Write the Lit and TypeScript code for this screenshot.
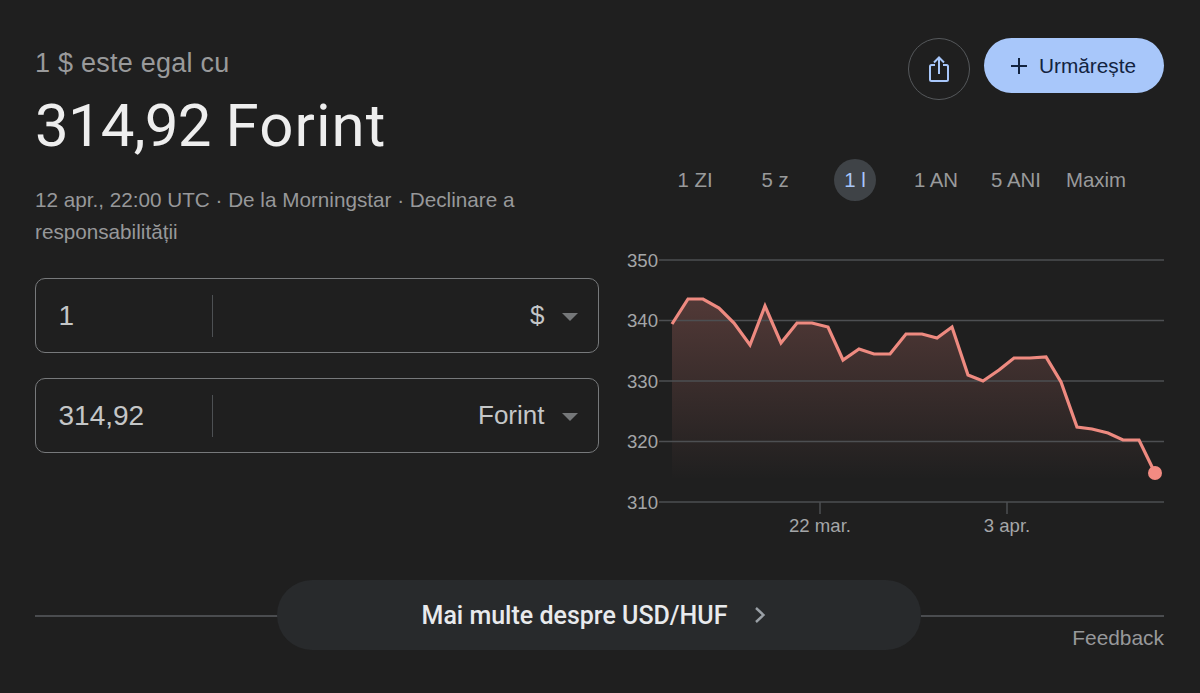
import { LitElement, html, css, svg } from 'lit';
import { customElement } from 'lit/decorators.js';

const RANGES = ['1 ZI', '5 z', '1 l', '1 AN', '5 ANI', 'Maxim'];

// chart coordinates are relative to the svg box, which starts at x=627, y=248
const POINTS: [number, number][] = [
  [45, 76], [61, 51], [76, 51], [92, 60], [107, 75], [123, 97], [138, 58], [154, 95],
  [170, 75], [185, 75], [201, 79], [216, 112], [232, 101], [247, 106], [263, 106], [279, 86],
  [295, 86], [310, 90], [325, 79], [341, 127], [356, 133], [372, 122], [387, 110], [403, 110],
  [419, 109], [434, 134], [450, 179], [465, 181], [481, 185], [496, 192], [512, 192], [528, 225],
];
const GRID = [
  { y: 12, label: '350' },
  { y: 72.5, label: '340' },
  { y: 133, label: '330' },
  { y: 193.5, label: '320' },
  { y: 254, label: '310' },
];
const TICKS = [
  { x: 193, label: '22 mar.' },
  { x: 380, label: '3 apr.' },
];

@customElement('app-root')
export class AppRoot extends LitElement {
  static styles = css`
    :host {
      display: block;
      height: 693px;
      background: #1f1f1f;
      font-family: 'Liberation Sans', Arial, sans-serif;
      color: #e8eaed;
      overflow: hidden;
    }

    .page {
      padding: 0 36px 0 35px;
    }

    .top {
      display: grid;
      grid-template-columns: 563.5px 537px;
      column-gap: 28.5px;
      height: 555px;
    }

    .eyebrow {
      padding-top: 47px;
      font-size: 27px;
      letter-spacing: 0.25px;
      line-height: 32px;
      color: #999a9b;
    }

    .rate {
      margin-top: 15px;
      font-family: Roboto, 'Liberation Sans', sans-serif;
      font-size: 60px;
      line-height: 64px;
      color: #eeeeee;
    }

    .rate .value {
      letter-spacing: -0.8px;
    }

    .rate .currency {
      letter-spacing: 1.1px;
    }

    .meta {
      margin-top: 26px;
      width: 520px;
      font-size: 20.7px;
      line-height: 32px;
      color: #97989a;
    }

    .converter {
      display: flex;
      flex-direction: column;
      gap: 25px;
      margin-top: 30px;
    }

    .field {
      display: flex;
      align-items: center;
      height: 75px;
      box-sizing: border-box;
      border: 1.5px solid #77797b;
      border-radius: 10px;
      font-size: 26px;
      color: #c4c6c7;
    }

    .amount {
      box-sizing: border-box;
      width: 176.5px;
      height: 42px;
      padding-left: 22.5px;
      font-size: 28px;
      line-height: 41px;
      border-right: 1.5px solid #4d5053;
    }

    .unit {
      flex: 1;
      text-align: right;
    }

    .caret {
      width: 0;
      height: 0;
      margin: 2px 20px 0 17px;
      border-left: 8px solid transparent;
      border-right: 8px solid transparent;
      border-top: 8px solid #757779;
    }

    .chart-col {
      display: flex;
      flex-direction: column;
    }

    .actions {
      display: flex;
      justify-content: flex-end;
      align-items: flex-start;
      gap: 14px;
      padding-top: 38px;
    }

    .share {
      display: flex;
      align-items: center;
      justify-content: center;
      box-sizing: border-box;
      width: 62px;
      height: 62px;
      border: 1.5px solid #55585b;
      border-radius: 50%;
    }

    .follow {
      display: flex;
      align-items: center;
      gap: 11px;
      box-sizing: border-box;
      width: 180px;
      height: 55px;
      padding-left: 26px;
      border-radius: 28px;
      background: #a8c7fa;
      color: #12233f;
      font-size: 20.8px;
    }

    .ranges {
      display: flex;
      align-items: center;
      height: 42px;
      margin-top: 59px;
      font-size: 20.4px;
      color: #999a9b;
    }

    .range {
      display: flex;
      align-items: center;
      justify-content: center;
      height: 42px;
      flex: none;
    }

    .range:nth-child(1) { width: 78px; margin-left: 29px; }
    .range:nth-child(2) { width: 82px; }
    .range:nth-child(3) { width: 42px; margin-left: 18px; }
    .range:nth-child(4) { width: 80px; margin-left: 20px; }
    .range:nth-child(5) { width: 76px; margin-left: 2px; }
    .range:nth-child(6) { width: 90px; margin-left: -3px; }

    .range.active {
      border-radius: 50%;
      background: #3f4347;
      color: #a8c7fa;
    }

    .plot {
      display: block;
      margin-top: 47px;
    }

    .axis-label {
      font-family: 'Liberation Sans', Arial, sans-serif;
      font-size: 18.6px;
      fill: #a4a6a8;
    }

    .bottom {
      display: flex;
      align-items: center;
      height: 70px;
      margin-top: 25px;
    }

    .rule {
      flex: 1;
      height: 2px;
      background: #4a4c4f;
      margin-top: 1px;
    }

    .more {
      display: flex;
      align-items: center;
      justify-content: center;
      gap: 27px;
      flex: none;
      margin-left: -1px;
      width: 644px;
      height: 70px;
      padding-right: 10px;
      box-sizing: border-box;
      border-radius: 35px;
      background: #282a2c;
      color: #e8eaed;
      font-family: Roboto, 'Liberation Sans', sans-serif;
      font-size: 25px;
      font-weight: 500;
    }

    .feedback {
      margin-top: -24px;
      text-align: right;
      font-size: 20.9px;
      line-height: 24px;
      color: #97989a;
    }
  `;

  renderPlot() {
    const line = POINTS.map((p) => p.join(',')).join(' ');
    const [first] = POINTS;
    const last = POINTS[POINTS.length - 1];
    const area = `${line} ${last[0]},232 ${first[0]},232`;
    return html`
      <svg class="plot" width="537" height="290" viewBox="0 0 537 290">
        <defs>
          <linearGradient id="fade" x1="0" y1="0" x2="0" y2="1">
            <stop offset="0" stop-color="#f28b82" stop-opacity="0.24"></stop>
            <stop offset="1" stop-color="#f28b82" stop-opacity="0"></stop>
          </linearGradient>
        </defs>
        <polygon points=${area} fill="url(#fade)"></polygon>
        ${GRID.map(
          (g) => svg`
            <line x1="32" x2="537" y1=${g.y} y2=${g.y} stroke="#4d4f52" stroke-width="1.5"></line>
            <text class="axis-label" x="0" y=${g.y + 6.5}>${g.label}</text>
          `
        )}
        ${TICKS.map(
          (t) => svg`
            <line x1=${t.x} x2=${t.x} y1=${254} y2=${266} stroke="#4d4f52" stroke-width="1.5"></line>
            <text class="axis-label" x=${t.x} y="284" text-anchor="middle">${t.label}</text>
          `
        )}
        <polyline points=${line} fill="none" stroke="#ee8a80" stroke-width="3.2" stroke-linejoin="miter"></polyline>
        <circle cx=${last[0]} cy=${last[1]} r="7" fill="#f28b82"></circle>
      </svg>
    `;
  }

  render() {
    return html`
      <div class="page">
        <div class="top">
          <div>
            <div class="eyebrow">1 $ este egal cu</div>
            <div class="rate"><span class="value">314,92</span> <span class="currency">Forint</span></div>
            <div class="meta">12 apr., 22:00 UTC · De la Morningstar · Declinare a responsabilității</div>
            <div class="converter">
              <div class="field">
                <div class="amount">1</div>
                <div class="unit">$</div>
                <div class="caret"></div>
              </div>
              <div class="field">
                <div class="amount">314,92</div>
                <div class="unit">Forint</div>
                <div class="caret"></div>
              </div>
            </div>
          </div>
          <div class="chart-col">
            <div class="actions">
              <div class="share">
                <svg width="24" height="28" viewBox="0 0 24 28" fill="none" stroke="#a8c7fa" stroke-width="2">
                  <path d="M8 10H4.5A1.5 1.5 0 0 0 3 11.5V24.5A1.5 1.5 0 0 0 4.5 26H19.5A1.5 1.5 0 0 0 21 24.5V11.5A1.5 1.5 0 0 0 19.5 10H16"></path>
                  <path d="M12 19V3M7 7.5L12 2.5L17 7.5"></path>
                </svg>
              </div>
              <div class="follow">
                <svg width="18" height="18" viewBox="0 0 18 18" stroke="#12233f" stroke-width="2">
                  <path d="M9 1V17M1 9H17"></path>
                </svg>
                <span>Urmărește</span>
              </div>
            </div>
            <div class="ranges">
              ${RANGES.map((r) => html`<div class="range ${r === '1 l' ? 'active' : ''}">${r}</div>`)}
            </div>
            ${this.renderPlot()}
          </div>
        </div>
        <div class="bottom">
          <div class="rule"></div>
          <div class="more">
            <span>Mai multe despre USD/HUF</span>
            <svg width="12" height="18" viewBox="0 0 12 18" fill="none" stroke="#9aa0a6" stroke-width="2.4">
              <path d="M2 2L9.5 9L2 16"></path>
            </svg>
          </div>
          <div class="rule"></div>
        </div>
        <div class="feedback">Feedback</div>
      </div>
    `;
  }
}

declare global {
  interface HTMLElementTagNameMap {
    'app-root': AppRoot;
  }
}
